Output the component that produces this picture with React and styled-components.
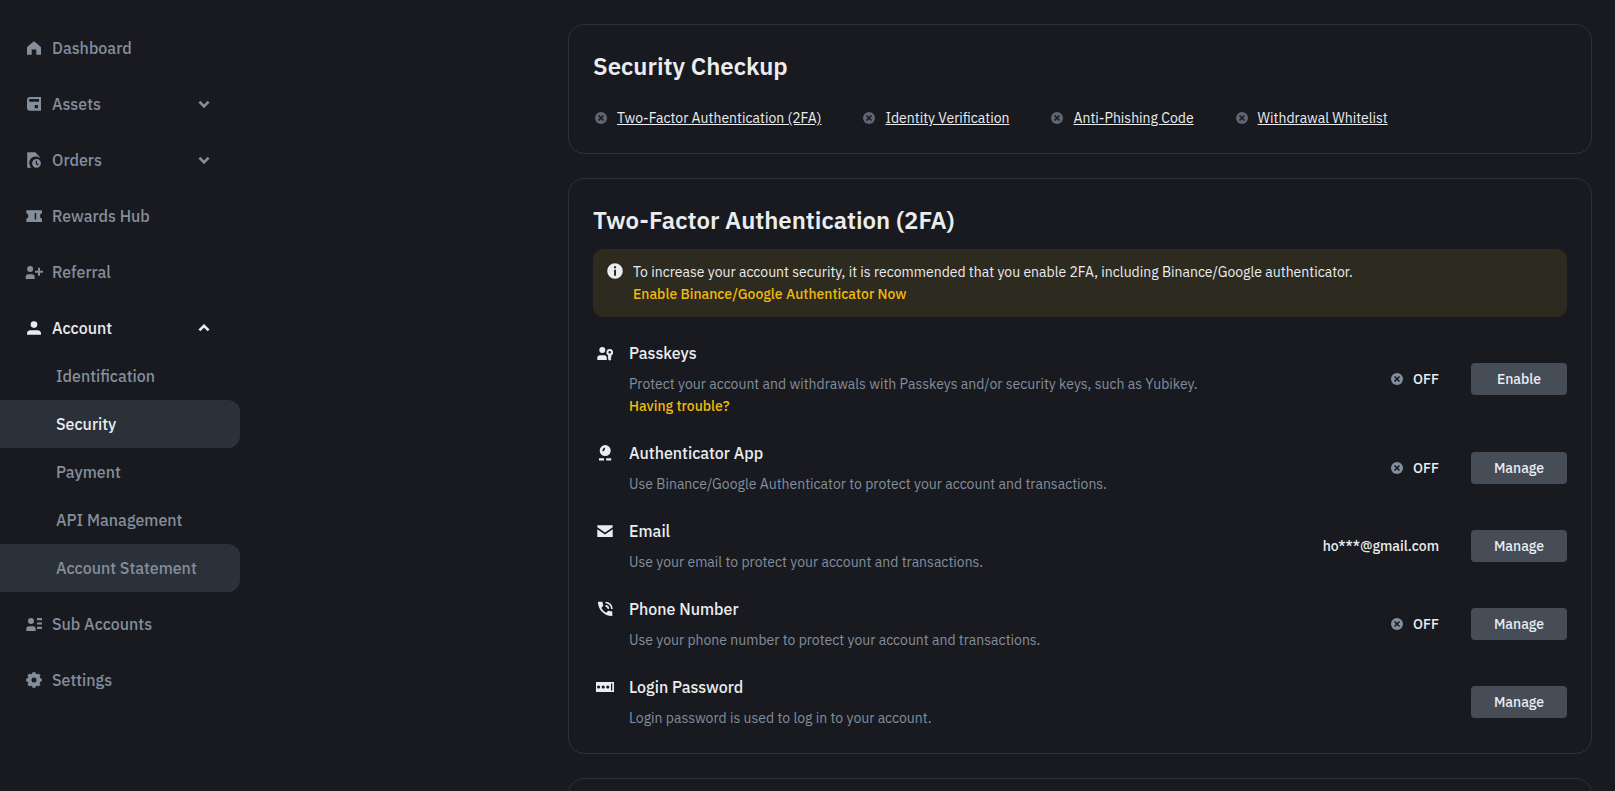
import React from 'react';
import styled, { createGlobalStyle } from 'styled-components';

const GlobalStyle = createGlobalStyle`
  * {
    box-sizing: border-box;
  }
  body {
    margin: 0;
    background: #181a20;
    color: #eaecef;
    font-family: 'IBM Plex Sans', Roboto, Arial, sans-serif;
    font-size: 14px;
    line-height: 22px;
  }
  h1, h2, h3, p, ul {
    margin: 0;
    padding: 0;
  }
  ul {
    list-style: none;
  }
`;

const Page = styled.div`
  display: flex;
  height: 100vh;
  overflow: hidden;
`;
const Sidebar = styled.nav`
  flex: 0 0 240px;
  padding-top: 16px;
`;
const NavItem = styled.li`
  padding-top: 8px;
`;
const NavLink = styled.a`
  height: 48px;
  padding: 0 28px 0 24px;
  display: flex;
  align-items: center;
  gap: 8px;
  color: ${({ $active }) => $active ? '#eaecef' : '#848e9c'};
  font-size: 16px;
  font-weight: 500;
  line-height: 24px;
  text-decoration: none;
`;
const NavLabel = styled.span`
  flex: 1;
`;
const SubLink = styled.a`
  height: 48px;
  padding-left: 56px;
  display: flex;
  align-items: center;
  border-radius: 0 12px 12px 0;
  background: ${({ $filled }) => $filled ? '#2b3139' : 'transparent'};
  color: ${({ $active }) => $active ? '#eaecef' : '#848e9c'};
  font-size: 16px;
  font-weight: 500;
  line-height: 24px;
  text-decoration: none;
`;

const Main = styled.main`
  flex: 1;
  min-width: 0;
  padding: 24px 23px;
  display: flex;
  flex-direction: column;
  align-items: flex-end;
  gap: 24px;
  overflow-y: auto;
  scrollbar-width: none;
`;
const Card = styled.section`
  flex-shrink: 0;
  width: 100%;
  max-width: 1024px;
  min-height: 96px;
  padding: 24px;
  border: 1px solid #2b3139;
  border-radius: 16px;
`;
const CardTitle = styled.h2`
  font-size: 24px;
  font-weight: 600;
  line-height: 34px;
`;
const Checks = styled.ul`
  margin-top: 24px;
  display: flex;
  flex-wrap: wrap;
  gap: 8px 40px;
`;
const Check = styled.li`
  display: flex;
  align-items: center;
  gap: 8px;
  color: #5e6673;
`;
const CheckLink = styled.a`
  color: #eaecef;
`;

const Notice = styled.div`
  margin: 12px 0 24px;
  padding: 12px;
  display: flex;
  gap: 8px;
  border-radius: 10px;
  background: #2d2a20;
`;
const YellowLink = styled.a`
  color: #f0b90b;
  font-weight: 500;
  text-decoration: none;
`;
const Methods = styled.ul`
  display: flex;
  flex-direction: column;
  gap: 24px;
`;
const Method = styled.li`
  display: flex;
  align-items: center;
  gap: 32px;
`;
const MethodInfo = styled.div`
  flex: 1;
  display: grid;
  grid-template-columns: 24px 1fr;
  column-gap: 12px;
`;
const MethodIcon = styled.span`
  height: 24px;
  display: flex;
  align-items: center;
  justify-content: center;
`;
const MethodTitle = styled.h3`
  margin-bottom: 8px;
  font-size: 16px;
  font-weight: 500;
  line-height: 24px;
`;
const Description = styled.p`
  color: #848e9c;
`;
const Status = styled.span`
  display: flex;
  align-items: center;
  gap: 8px;
  font-weight: 500;
  svg {
    color: #848e9c;
  }
`;
const Button = styled.button`
  width: 96px;
  height: 32px;
  padding: 0;
  border: 0;
  border-radius: 4px;
  background: #474d57;
  color: #eaecef;
  font-family: inherit;
  font-size: 14px;
  font-weight: 500;
  cursor: pointer;
`;
const Svg = styled.svg`
  flex-shrink: 0;
  display: block;
`;

const Icon = ({ size = 20, children }) => (
  <Svg width={size} height={size} viewBox={`0 0 ${size} ${size}`} fill="currentColor" aria-hidden="true">
    {children}
  </Svg>
);

const HomeIcon = () => (
  <Icon><path d="M10 3.2c2.6 1.9 5 3.9 7 6.1v7.4h-4.7v-5.2H7.7v5.2H3V9.3c2-2.2 4.4-4.2 7-6.1z" /></Icon>
);
const AssetsIcon = () => (
  <Icon>
    <path fillRule="evenodd" d="M6 3h11v13.7H6a3 3 0 0 1-3-3V6a3 3 0 0 1 3-3zm.3 2a1.4 1.4 0 0 0 0 2.8H15V5zM10.7 11v3.2H14V11z" />
  </Icon>
);
const OrdersIcon = () => (
  <Icon>
    <path d="M3.2 2.3h8.1l4.2 4.4V8a6 6 0 0 0-8 9.7H3.2z" />
    <path fillRule="evenodd" d="M12.5 8.9a4.4 4.4 0 1 0 0 8.800 4.400 4.400 0 0 0 0-8.800zm-.8 1.8H13v2.4l1.7 1.5-.9 1-2.100-1.900z" />
  </Icon>
);
const RewardsIcon = () => (
  <Icon>
    <path fillRule="evenodd" d="M2.300 4.300H18V7a3.200 3.200 0 0 0 0 6v3H2.300v-3a3.200 3.200 0 0 0 0-6zM10.700 7v6.400h1.500V7z" />
  </Icon>
);
const ReferralIcon = () => (
  <Icon>
    <circle cx="6.1" cy="7" r="3" />
    <path d="M1.700 17v-2a2.800 2.800 0 0 1 2.800-2.800h3.400a2.800 2.800 0 0 1 2.800 2.800v2zM14 5.700h2v3h3v2h-3v3h-2v-3h-3v-2h3z" />
  </Icon>
);
const AccountIcon = () => (
  <Icon>
    <circle cx="10" cy="6.6" r="3.3" />
    <path d="M3 16.700v-.9a3.500 3.500 0 0 1 3.500-3.500h7a3.500 3.500 0 0 1 3.500 3.500v.9z" />
  </Icon>
);
const SubAccountsIcon = () => (
  <Icon>
    <circle cx="7" cy="6.9" r="3" />
    <path d="M2.300 17v-2a2.800 2.800 0 0 1 2.800-2.800h3.800a2.800 2.800 0 0 1 2.800 2.800v2zM13 4h5v2.200h-5zM13 8.400h5v2.200h-5zM13 12.800h5V15h-5z" />
  </Icon>
);
const SettingsIcon = () => (
  <Icon>
    <circle cx="10" cy="10" r="4.5" fill="none" stroke="currentColor" strokeWidth="4" />
    {[0, 45, 90, 135, 180, 225, 270, 315].map(angle => (
      <path key={angle} d="M8.500 2.200h3l.5 3H8z" transform={`rotate(${angle} 10 10)`} />
    ))}
  </Icon>
);
const ChevronIcon = ({ up }) => (
  <Icon size={16}>
    <path
      d={up ? 'M3.400 10.400 8 5.800l4.600 4.600' : 'M3.400 5.700 8 10.300l4.600-4.600'}
      fill="none"
      stroke="currentColor"
      strokeWidth="2.6"
    />
  </Icon>
);
const CrossIcon = () => (
  <Icon size={16}>
    <circle cx="8" cy="8" r="6" />
    <path d="m5.500 5.500 5 5m0-5-5 5" stroke="#181a20" strokeWidth="1.6" />
  </Icon>
);
const InfoIcon = () => (
  <Icon>
    <path fillRule="evenodd" d="M10 2.200a7.800 7.800 0 1 0 0 15.600 7.800 7.800 0 0 0 0-15.600zM9 5.300h2v2H9zm0 3.400h2v6H9z" />
  </Icon>
);
const PasskeyIcon = () => (
  <Icon>
    <circle cx="7.3" cy="7" r="3" />
    <path d="M2.300 17v-2a2.800 2.800 0 0 1 2.800-2.800h4.100c1.300 0 2.300.8 2.600 2V17z" />
    <path fillRule="evenodd" d="M14.700 6a3.300 3.300 0 0 0-1.600 6.200v4l1.600 1.500 1.700-1.500-.8-1.100.8-1.200v-1.700A3.300 3.300 0 0 0 14.700 6zm0 1.900a1.300 1.300 0 1 1 0 2.600 1.300 1.300 0 0 1 0-2.600z" />
  </Icon>
);
const AuthenticatorIcon = () => (
  <Icon>
    <circle cx="10.2" cy="7.6" r="5.5" />
    <path d="M7.500 8.500c-.3-2 .6-3.500 2.500-4 .3 1.900-.6 3.400-2.500 4z" fill="#181a20" />
    <path d="M4 15.200h5v2.400H4zM11.200 15.200h5v2.400h-5z" />
  </Icon>
);
const EmailIcon = () => (
  <Icon>
    <path d="M2.300 4.300h15.400v2L10 11.600 2.300 6.300z" />
    <path d="m2.300 8.200 7.700 5.300 7.700-5.300V16H2.300z" />
  </Icon>
);
const PhoneIcon = () => (
  <Icon>
    <path d="M3 2.700h4.400l.9 4-2 2.200a12 12 0 0 0 4.800 4.800l2.200-2 4 .9V17C9.500 17.200 2.800 10.500 3 2.700z" />
    <path d="M10.500 6.900a3.200 3.200 0 0 1 3 3M10.500 3.500a6.400 6.400 0 0 1 6.400 6.400" fill="none" stroke="currentColor" strokeWidth="1.6" />
  </Icon>
);
const PasswordIcon = () => (
  <Icon>
    <path d="M1 5h18v10H1z" />
    <g fill="#181a20">
      <circle cx="3.6" cy="10" r="1.6" />
      <circle cx="8.2" cy="10" r="1.6" />
      <circle cx="12.8" cy="10" r="1.6" />
      <path d="M16 6.500h1.300v7H16z" />
    </g>
  </Icon>
);

const navItems = [
  { label: 'Dashboard', icon: HomeIcon },
  { label: 'Assets', icon: AssetsIcon, expandable: true },
  { label: 'Orders', icon: OrdersIcon, expandable: true },
  { label: 'Rewards Hub', icon: RewardsIcon },
  { label: 'Referral', icon: ReferralIcon },
  {
    label: 'Account',
    icon: AccountIcon,
    expandable: true,
    active: true,
    children: [
      { label: 'Identification' },
      { label: 'Security', active: true, filled: true },
      { label: 'Payment' },
      { label: 'API Management' },
      { label: 'Account Statement', filled: true },
    ],
  },
  { label: 'Sub Accounts', icon: SubAccountsIcon },
  { label: 'Settings', icon: SettingsIcon },
];

const checks = [
  'Two-Factor Authentication (2FA)',
  'Identity Verification',
  'Anti-Phishing Code',
  'Withdrawal Whitelist',
];

const methods = [
  {
    title: 'Passkeys',
    icon: PasskeyIcon,
    text: 'Protect your account and withdrawals with Passkeys and/or security keys, such as Yubikey.',
    help: 'Having trouble?',
    off: true,
    action: 'Enable',
  },
  {
    title: 'Authenticator App',
    icon: AuthenticatorIcon,
    text: 'Use Binance/Google Authenticator to protect your account and transactions.',
    off: true,
    action: 'Manage',
  },
  {
    title: 'Email',
    icon: EmailIcon,
    text: 'Use your email to protect your account and transactions.',
    value: 'ho***@gmail.com',
    action: 'Manage',
  },
  {
    title: 'Phone Number',
    icon: PhoneIcon,
    text: 'Use your phone number to protect your account and transactions.',
    off: true,
    action: 'Manage',
  },
  {
    title: 'Login Password',
    icon: PasswordIcon,
    text: 'Login password is used to log in to your account.',
    action: 'Manage',
  },
];

const SideNav = () => (
  <Sidebar>
    <ul>
      {navItems.map(({ label, icon: ItemIcon, expandable, active, children }) => (
        <NavItem key={label}>
          <NavLink href="#" $active={active}>
            <ItemIcon />
            <NavLabel>{label}</NavLabel>
            {expandable && <ChevronIcon up={active} />}
          </NavLink>
          {children && (
            <ul>
              {children.map(child => (
                <li key={child.label}>
                  <SubLink href="#" $active={child.active} $filled={child.filled}>
                    {child.label}
                  </SubLink>
                </li>
              ))}
            </ul>
          )}
        </NavItem>
      ))}
    </ul>
  </Sidebar>
);

const MethodRow = ({ method }) => {
  const { title, icon: RowIcon, text, help, off, value, action } = method;

  return (
    <Method>
      <MethodInfo>
        <MethodIcon><RowIcon /></MethodIcon>
        <div>
          <MethodTitle>{title}</MethodTitle>
          <Description>{text}</Description>
          {help && <YellowLink href="#">{help}</YellowLink>}
        </div>
      </MethodInfo>
      {off && <Status><CrossIcon />OFF</Status>}
      {value && <Status>{value}</Status>}
      <Button type="button">{action}</Button>
    </Method>
  );
};

const App = () => (
  <>
    <GlobalStyle />
    <Page>
      <SideNav />
      <Main>
        <Card>
          <CardTitle>Security Checkup</CardTitle>
          <Checks>
            {checks.map(check => (
              <Check key={check}>
                <CrossIcon />
                <CheckLink href="#">{check}</CheckLink>
              </Check>
            ))}
          </Checks>
        </Card>
        <Card>
          <CardTitle>Two-Factor Authentication (2FA)</CardTitle>
          <Notice>
            <InfoIcon />
            <div>
              <p>To increase your account security, it is recommended that you enable 2FA, including Binance/Google authenticator.</p>
              <YellowLink href="#">Enable Binance/Google Authenticator Now</YellowLink>
            </div>
          </Notice>
          <Methods>
            {methods.map(method => <MethodRow key={method.title} method={method} />)}
          </Methods>
        </Card>
        <Card />
      </Main>
    </Page>
  </>
);

export default App;
